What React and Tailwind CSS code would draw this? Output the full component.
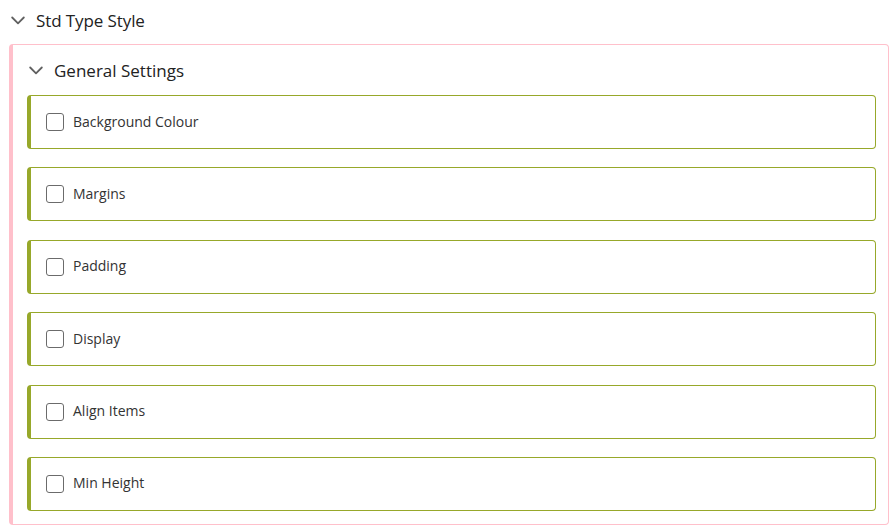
import React from 'react';

const items = ['Background Colour', 'Margins', 'Padding', 'Display', 'Align Items', 'Min Height'];

function Chevron() {
  return (
    <svg width="14" height="9" viewBox="0 0 14 9" fill="none">
      <path d="M1.2 1.5 L7 7.3 L12.8 1.5" stroke="#606060" strokeWidth="1.8" strokeLinecap="round" strokeLinejoin="round" />
    </svg>
  );
}

export default function App() {
  return (
    <div className="w-[896px] h-[531px] bg-white pl-[9px] font-['Open_Sans',sans-serif] text-[#222]">
      <div className="h-10 flex items-center pl-[2px]">
        <Chevron />
        <span className="ml-[11px] text-[17px] tracking-[-0.1px] leading-none">Std Type Style</span>
      </div>
      <div className="mt-1 w-[880px] h-[481px] border border-l-4 border-[#ffc0cb] rounded-[4px] pl-[14px] pr-3">
        <div className="h-[50px] flex items-center pl-[2px] pt-[1px]">
          <Chevron />
          <span className="ml-[11px] text-[17px] tracking-[0px] leading-none">General Settings</span>
        </div>
        <div className="flex flex-col gap-[18.4px]">
          {items.map((label) => (
            <div key={label} className="h-[54px] border border-l-4 border-[#97a82a] rounded-[4px] flex items-center pl-[15px]">
              <span className="w-[18px] h-[18px] border border-[#6b6b6b] rounded-[3px] bg-white" />
              <span className="ml-[9px] text-[14px] text-[#333] leading-none pb-[1px]">{label}</span>
            </div>
          ))}
        </div>
      </div>
    </div>
  );
}
